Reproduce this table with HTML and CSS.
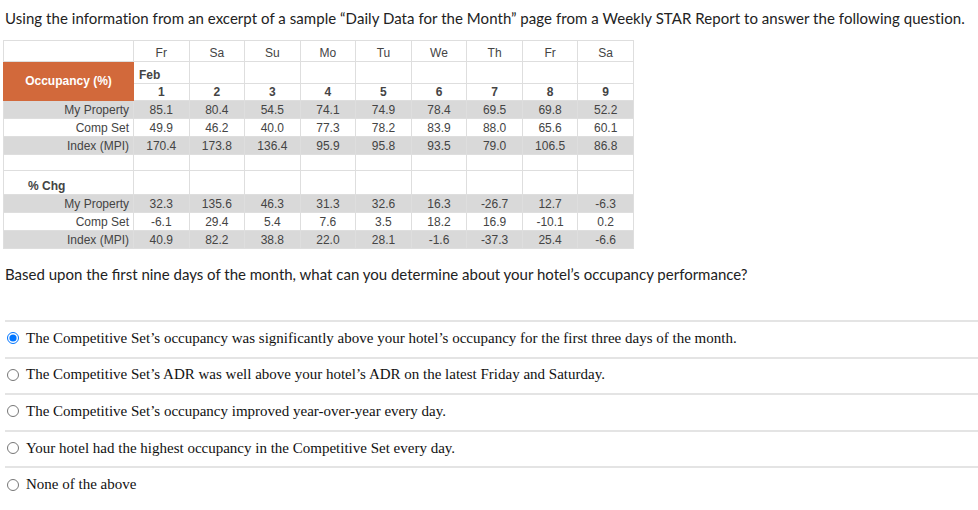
FILE: index.html
```html
<!DOCTYPE html>
<html>
<head>
<meta charset="utf-8">
<link rel="stylesheet" href="styles.css">
</head>
<body>
<p class="intro">Using the information from an excerpt of a sample “Daily Data for the Month” page from a Weekly STAR Report to answer the following question.</p>
<table class="star">
  <colgroup><col class="c-label"><col span="9"></colgroup>
  <tr class="r-head">
    <td></td><td>Fr</td><td>Sa</td><td>Su</td><td>Mo</td><td>Tu</td><td>We</td><td>Th</td><td>Fr</td><td>Sa</td>
  </tr>
  <tr class="r-month">
    <td class="occ" rowspan="2">Occupancy (%)</td><td class="month">Feb</td><td></td><td></td><td></td><td></td><td></td><td></td><td></td><td></td>
  </tr>
  <tr class="r-num">
    <td>1</td><td>2</td><td>3</td><td>4</td><td>5</td><td>6</td><td>7</td><td>8</td><td>9</td>
  </tr>
  <tr class="r-data shade">
    <td class="lbl">My Property</td><td>85.1</td><td>80.4</td><td>54.5</td><td>74.1</td><td>74.9</td><td>78.4</td><td>69.5</td><td>69.8</td><td>52.2</td>
  </tr>
  <tr class="r-data">
    <td class="lbl">Comp Set</td><td>49.9</td><td>46.2</td><td>40.0</td><td>77.3</td><td>78.2</td><td>83.9</td><td>88.0</td><td>65.6</td><td>60.1</td>
  </tr>
  <tr class="r-data shade">
    <td class="lbl">Index (MPI)</td><td>170.4</td><td>173.8</td><td>136.4</td><td>95.9</td><td>95.8</td><td>93.5</td><td>79.0</td><td>106.5</td><td>86.8</td>
  </tr>
  <tr class="r-gap">
    <td></td><td></td><td></td><td></td><td></td><td></td><td></td><td></td><td></td><td></td>
  </tr>
  <tr class="r-chg">
    <td class="chg">% Chg</td><td></td><td></td><td></td><td></td><td></td><td></td><td></td><td></td><td></td>
  </tr>
  <tr class="r-data shade">
    <td class="lbl">My Property</td><td>32.3</td><td>135.6</td><td>46.3</td><td>31.3</td><td>32.6</td><td>16.3</td><td>-26.7</td><td>12.7</td><td>-6.3</td>
  </tr>
  <tr class="r-data">
    <td class="lbl">Comp Set</td><td>-6.1</td><td>29.4</td><td>5.4</td><td>7.6</td><td>3.5</td><td>18.2</td><td>16.9</td><td>-10.1</td><td>0.2</td>
  </tr>
  <tr class="r-data shade">
    <td class="lbl">Index (MPI)</td><td>40.9</td><td>82.2</td><td>38.8</td><td>22.0</td><td>28.1</td><td>-1.6</td><td>-37.3</td><td>25.4</td><td>-6.6</td>
  </tr>
</table>
<p class="question">Based upon the first nine days of the month, what can you determine about your hotel’s occupancy performance?</p>
<ul class="options">
  <li><input type="radio" name="q" checked><span>The Competitive Set’s occupancy was significantly above your hotel’s occupancy for the first three days of the month.</span></li>
  <li><input type="radio" name="q"><span>The Competitive Set’s ADR was well above your hotel’s ADR on the latest Friday and Saturday.</span></li>
  <li><input type="radio" name="q"><span>The Competitive Set’s occupancy improved year-over-year every day.</span></li>
  <li><input type="radio" name="q"><span>Your hotel had the highest occupancy in the Competitive Set every day.</span></li>
  <li><input type="radio" name="q"><span>None of the above</span></li>
</ul>
</body>
</html>
```

FILE: styles.css
```css
html, body {
  margin: 0;
  padding: 0;
  background: #fff;
}
body {
  padding: 0 0 0 5px;
  font-family: Lato, "Liberation Sans", sans-serif;
  color: #222;
}
.intro {
  margin: 8px 0 0;
  font-size: 15px;
  line-height: 20px;
  letter-spacing: 0.05px;
  white-space: nowrap;
}
.star {
  margin: 12px 0 0 -2px;
  width: 631px;
  border-collapse: collapse;
  table-layout: fixed;
  font-family: "Liberation Sans", Arial, sans-serif;
  font-size: 12px;
  color: #444;
}
.star col.c-label {
  width: 130px;
}
.star td {
  border: 1px solid #dedede;
  padding: 0;
  text-align: center;
  line-height: 14px;
}
.r-head td { height: 19px; vertical-align: bottom; padding-bottom: 1px; }
.r-month td { height: 20px; vertical-align: bottom; padding-bottom: 1px; }
.r-num td { height: 16px; font-weight: bold; }
.r-data td { height: 17px; }
.r-gap td { height: 15px; }
.r-chg td { height: 22px; }
.shade td { background: #d9d9d9; }
.star td.lbl {
  text-align: right;
  padding-right: 4px;
}
.star td.occ {
  background: #d2693b;
  color: #fff;
  font-weight: bold;
  border-color: #d2693b;
  vertical-align: middle;
  padding-bottom: 0;
}
.star td.month {
  text-align: left;
  padding-left: 5px;
  font-weight: bold;
}
.star td.chg {
  text-align: left;
  padding-left: 24px;
  font-weight: bold;
  vertical-align: bottom;
  padding-bottom: 1px;
}
.question {
  margin: 15px 0 0;
  font-size: 15px;
  line-height: 20px;
}
.options {
  list-style: none;
  margin: 36px 0 0;
  padding: 0;
  font-family: "Liberation Serif", "Times New Roman", serif;
  font-size: 15px;
  color: #111;
}
.options li {
  display: flex;
  align-items: center;
  box-sizing: border-box;
  height: 36.6px;
  padding-bottom: 2px;
  border-top: 2px solid #e4e4e4;
}
.options input {
  margin: 0 7px 0 2px;
  width: 12px;
  height: 12px;
}
```
